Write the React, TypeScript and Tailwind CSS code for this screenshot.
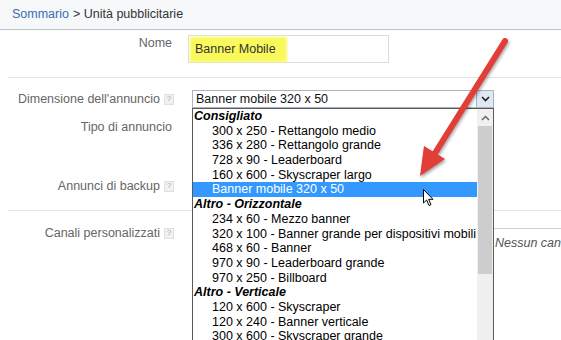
import React from "react";

const Help = () => (
  <span className="inline-flex items-center justify-center w-[10px] h-[11px] ml-[4px] bg-[#f1f1f1] border border-[#e0e0e0] text-[8px] leading-none text-[#aaa]">?</span>
);

type Opt = { t: string; g?: boolean; sel?: boolean };

const options: Opt[] = [
  { t: "Consigliato", g: true },
  { t: "300 x 250 - Rettangolo medio" },
  { t: "336 x 280 - Rettangolo grande" },
  { t: "728 x 90 - Leaderboard" },
  { t: "160 x 600 - Skyscraper largo" },
  { t: "Banner mobile 320 x 50", sel: true },
  { t: "Altro - Orizzontale", g: true },
  { t: "234 x 60 - Mezzo banner" },
  { t: "320 x 100 - Banner grande per dispositivi mobili" },
  { t: "468 x 60 - Banner" },
  { t: "970 x 90 - Leaderboard grande" },
  { t: "970 x 250 - Billboard" },
  { t: "Altro - Verticale", g: true },
  { t: "120 x 600 - Skyscraper" },
  { t: "120 x 240 - Banner verticale" },
  { t: "300 x 600 - Skyscraper grande" },
];

export default function App() {
  return (
    <div
      className="relative w-[561px] h-[340px] overflow-hidden bg-white text-[12.5px]"
      style={{ fontFamily: '"Liberation Sans", Arial, sans-serif' }}
    >
      {/* header */}
      <div className="h-[30px] flex items-center pl-[12px] bg-[#f6f8fa] border-b border-[#b9c3cd]">
        <span className="text-[#3a6db3]">Sommario</span>
        <span className="text-[#333] ml-[4px]">&gt; Unità pubblicitarie</span>
      </div>

      <div className="flex h-[310px]">
        <div className="w-[4px] bg-[#ebebeb]" />
        <div className="flex-1 flex flex-col">
          {/* Nome */}
          <div className="flex mt-[5px]">
            <div className="w-[172px] text-right text-[#666] leading-[16px]">Nome</div>
            <div className="ml-[16px] w-[201px] h-[28px] border border-[#dcdcdc] relative flex items-center">
              <div className="absolute left-[1px] top-[1px] w-[97px] h-[25px] bg-[#f9f95c] blur-[1px]" />
              <span className="relative pl-[6px] text-[#333]">Banner Mobile</span>
            </div>
          </div>
          <div className="mt-[14px] ml-[8px] h-px bg-[#e4e4e4]" />

          {/* Dimensione */}
          <div className="flex mt-[12px] h-[18px] items-center">
            <div className="w-[174px] flex justify-end items-center text-[#666]">
              Dimensione dell'annuncio<Help />
            </div>
          </div>

          {/* Tipo di annuncio */}
          <div className="flex mt-[11px]">
            <div className="w-[172px] text-right text-[#666] leading-[16px]">Tipo di annuncio</div>
          </div>

          {/* Annunci di backup */}
          <div className="flex mt-[43px]">
            <div className="w-[174px] flex justify-end items-center text-[#666] leading-[16px]">
              Annunci di backup<Help />
            </div>
          </div>
          <div className="mt-[16px] ml-[8px] h-px bg-[#e4e4e4]" />

          {/* Canali personalizzati */}
          <div className="flex mt-[14px]">
            <div className="w-[174px] h-[16px] flex justify-end items-center text-[#666] leading-[16px]">
              Canali personalizzati<Help />
            </div>
            <div className="ml-[317px] flex-1 mt-[3px] h-[100px] border-l border-t border-[#cfcfcf] pl-[3px] pt-[5px] italic text-[#555] whitespace-nowrap overflow-hidden">
              Nessun canale
            </div>
          </div>
        </div>
      </div>

      {/* select box */}
      <div className="absolute left-[192px] top-[90px] w-[302px] h-[18px] border border-[#a9b4c2] bg-white flex items-center">
        <span className="pl-[3px] text-[#111] leading-none flex-1">Banner mobile 320 x 50</span>
        <div className="w-[17px] h-[16px] bg-[#dfe8f3] border-l border-[#9db6d6] flex items-center justify-center">
          <svg width="9" height="6" viewBox="0 0 9 6">
            <path d="M1 1 L4.5 4.5 L8 1" fill="none" stroke="#222" strokeWidth="1.6" />
          </svg>
        </div>
      </div>

      {/* open list */}
      <div className="absolute left-[192px] top-[108px] w-[302px] h-[240px] border border-[#5a5a5a] bg-white flex">
        <div className="flex-1 flex flex-col overflow-hidden">
          {options.map((o, i) => (
            <div
              key={i}
              className={
                "h-[14.7px] leading-[14.7px] whitespace-nowrap " +
                (o.g
                  ? "pl-[1px] font-bold italic text-black"
                  : o.sel
                  ? "pl-[19px] bg-[#3399ff] text-white"
                  : "pl-[19px] text-black")
              }
            >
              {o.t}
            </div>
          ))}
        </div>
        <div className="w-[16px] bg-[#f0f0f0] flex flex-col">
          <div className="h-[17px] flex items-center justify-center">
            <svg width="9" height="6" viewBox="0 0 9 6">
              <path d="M1 5 L4.5 1.5 L8 5" fill="none" stroke="#606060" strokeWidth="1.4" />
            </svg>
          </div>
          <div className="mx-[1px] h-[148px] bg-[#cdcdcd]" />
        </div>
      </div>

      {/* red arrow */}
      <svg
        className="absolute left-0 top-0 pointer-events-none"
        width="561"
        height="340"
        viewBox="0 0 561 340"
        style={{ filter: "drop-shadow(1px 2px 1.5px rgba(0,0,0,0.35))" }}
      >
        <line x1="505" y1="41" x2="432" y2="158" stroke="#e23d36" strokeWidth="6" strokeLinecap="round" />
        <polygon points="420,176 424,146 445,159" fill="#e23d36" />
      </svg>

      {/* mouse cursor */}
      <svg className="absolute left-[423px] top-[189px]" width="12" height="18" viewBox="0 0 12 18">
        <path d="M0.5 0.5 L0.5 14 L3.6 11 L6 16.5 L8 15.6 L5.6 10.3 L10 10.3 Z" fill="#fff" stroke="#000" strokeWidth="1" strokeLinejoin="round" />
      </svg>
    </div>
  );
}
